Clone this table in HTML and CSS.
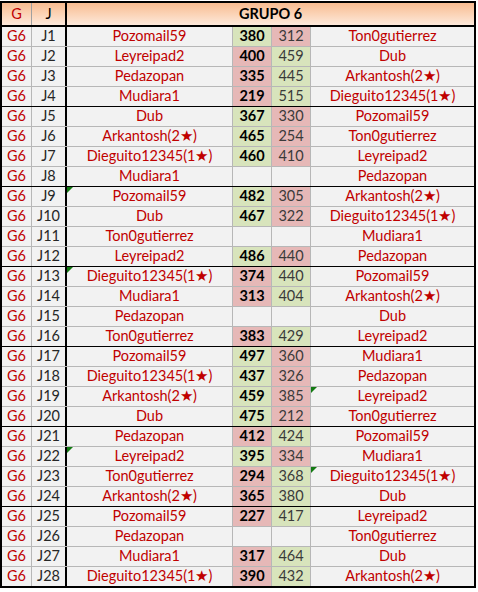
FILE: index.html
```html
<!DOCTYPE html>
<html>
<head>
<meta charset="utf-8">
<link rel="stylesheet" href="styles.css">
</head>
<body>
<div class="sheet">
  <div class="row head">
    <div class="c g red">G</div>
    <div class="c j">J</div>
    <div class="c title">GRUPO 6</div>
  </div>

  <div class="row"><div class="c g">G6</div><div class="c j">J1</div><div class="c p">Pozomail59</div><div class="c s1 win">380</div><div class="c s2 lose">312</div><div class="c p a">Ton0gutierrez</div></div>
  <div class="row"><div class="c g">G6</div><div class="c j">J2</div><div class="c p">Leyreipad2</div><div class="c s1 lose">400</div><div class="c s2 win">459</div><div class="c p a">Dub</div></div>
  <div class="row"><div class="c g">G6</div><div class="c j">J3</div><div class="c p">Pedazopan</div><div class="c s1 lose">335</div><div class="c s2 win">445</div><div class="c p a">Arkantosh(2★)</div></div>
  <div class="row end"><div class="c g">G6</div><div class="c j">J4</div><div class="c p">Mudiara1</div><div class="c s1 lose">219</div><div class="c s2 win">515</div><div class="c p a">Dieguito12345(1★)</div></div>

  <div class="row"><div class="c g">G6</div><div class="c j">J5</div><div class="c p">Dub</div><div class="c s1 win">367</div><div class="c s2 lose">330</div><div class="c p a">Pozomail59</div></div>
  <div class="row"><div class="c g">G6</div><div class="c j">J6</div><div class="c p">Arkantosh(2★)</div><div class="c s1 win">465</div><div class="c s2 lose">254</div><div class="c p a">Ton0gutierrez</div></div>
  <div class="row"><div class="c g">G6</div><div class="c j">J7</div><div class="c p">Dieguito12345(1★)</div><div class="c s1 win">460</div><div class="c s2 lose">410</div><div class="c p a">Leyreipad2</div></div>
  <div class="row end"><div class="c g">G6</div><div class="c j">J8</div><div class="c p">Mudiara1</div><div class="c s1"></div><div class="c s2"></div><div class="c p a">Pedazopan</div></div>

  <div class="row"><div class="c g">G6</div><div class="c j">J9</div><div class="c p mark">Pozomail59</div><div class="c s1 win">482</div><div class="c s2 lose">305</div><div class="c p a">Arkantosh(2★)</div></div>
  <div class="row"><div class="c g">G6</div><div class="c j">J10</div><div class="c p">Dub</div><div class="c s1 win">467</div><div class="c s2 lose">322</div><div class="c p a">Dieguito12345(1★)</div></div>
  <div class="row"><div class="c g">G6</div><div class="c j">J11</div><div class="c p">Ton0gutierrez</div><div class="c s1"></div><div class="c s2"></div><div class="c p a">Mudiara1</div></div>
  <div class="row end"><div class="c g">G6</div><div class="c j">J12</div><div class="c p">Leyreipad2</div><div class="c s1 win">486</div><div class="c s2 lose">440</div><div class="c p a">Pedazopan</div></div>

  <div class="row"><div class="c g">G6</div><div class="c j">J13</div><div class="c p mark">Dieguito12345(1★)</div><div class="c s1 lose">374</div><div class="c s2 win">440</div><div class="c p a">Pozomail59</div></div>
  <div class="row"><div class="c g">G6</div><div class="c j">J14</div><div class="c p">Mudiara1</div><div class="c s1 lose">313</div><div class="c s2 win">404</div><div class="c p a">Arkantosh(2★)</div></div>
  <div class="row"><div class="c g">G6</div><div class="c j">J15</div><div class="c p">Pedazopan</div><div class="c s1"></div><div class="c s2"></div><div class="c p a">Dub</div></div>
  <div class="row end"><div class="c g">G6</div><div class="c j">J16</div><div class="c p">Ton0gutierrez</div><div class="c s1 lose">383</div><div class="c s2 win">429</div><div class="c p a">Leyreipad2</div></div>

  <div class="row"><div class="c g">G6</div><div class="c j">J17</div><div class="c p">Pozomail59</div><div class="c s1 win">497</div><div class="c s2 lose">360</div><div class="c p a">Mudiara1</div></div>
  <div class="row"><div class="c g">G6</div><div class="c j">J18</div><div class="c p">Dieguito12345(1★)</div><div class="c s1 win">437</div><div class="c s2 lose">326</div><div class="c p a">Pedazopan</div></div>
  <div class="row"><div class="c g">G6</div><div class="c j">J19</div><div class="c p">Arkantosh(2★)</div><div class="c s1 win">459</div><div class="c s2 lose">385</div><div class="c p a mark">Leyreipad2</div></div>
  <div class="row end"><div class="c g">G6</div><div class="c j">J20</div><div class="c p">Dub</div><div class="c s1 win">475</div><div class="c s2 lose">212</div><div class="c p a">Ton0gutierrez</div></div>

  <div class="row"><div class="c g">G6</div><div class="c j">J21</div><div class="c p">Pedazopan</div><div class="c s1 lose">412</div><div class="c s2 win">424</div><div class="c p a">Pozomail59</div></div>
  <div class="row"><div class="c g">G6</div><div class="c j">J22</div><div class="c p mark">Leyreipad2</div><div class="c s1 win">395</div><div class="c s2 lose">334</div><div class="c p a">Mudiara1</div></div>
  <div class="row"><div class="c g">G6</div><div class="c j">J23</div><div class="c p">Ton0gutierrez</div><div class="c s1 lose">294</div><div class="c s2 win">368</div><div class="c p a mark">Dieguito12345(1★)</div></div>
  <div class="row end"><div class="c g">G6</div><div class="c j">J24</div><div class="c p">Arkantosh(2★)</div><div class="c s1 lose">365</div><div class="c s2 win">380</div><div class="c p a">Dub</div></div>

  <div class="row"><div class="c g">G6</div><div class="c j">J25</div><div class="c p">Pozomail59</div><div class="c s1 lose">227</div><div class="c s2 win">417</div><div class="c p a">Leyreipad2</div></div>
  <div class="row"><div class="c g">G6</div><div class="c j">J26</div><div class="c p">Pedazopan</div><div class="c s1"></div><div class="c s2"></div><div class="c p a">Ton0gutierrez</div></div>
  <div class="row"><div class="c g">G6</div><div class="c j">J27</div><div class="c p">Mudiara1</div><div class="c s1 lose">317</div><div class="c s2 win">464</div><div class="c p a">Dub</div></div>
  <div class="row last"><div class="c g">G6</div><div class="c j">J28</div><div class="c p">Dieguito12345(1★)</div><div class="c s1 lose">390</div><div class="c s2 win">432</div><div class="c p a">Arkantosh(2★)</div></div>
</div>
</body>
</html>
```

FILE: styles.css
```css
html, body {
  margin: 0;
  padding: 0;
  background: #ffffff;
}
body {
  padding-top: 1px;
  font-family: Lato, "Open Sans", sans-serif;
  font-size: 14.5px;
}
.sheet {
  width: 476px;
  box-sizing: border-box;
  border: 2px solid #000;
  display: flex;
  flex-direction: column;
}
.row {
  display: flex;
  height: 20px;
  border-bottom: 1px solid #b7b7b7;
  box-sizing: border-box;
  background: #f2f2f2;
}
.row.end {
  border-bottom-color: #000;
}
.row.last {
  border-bottom: none;
  height: 19px;
}
.row.head {
  height: 24px;
  border-bottom: 2px solid #000;
  background: linear-gradient(to bottom, #f8bc91 0%, #fbd3b6 50%, #fde9db 100%);
}
.c {
  box-sizing: border-box;
  display: flex;
  align-items: center;
  justify-content: center;
  border-right: 1px solid #b7b7b7;
  white-space: nowrap;
  position: relative;
  line-height: 1;
}
.g {
  width: 30px;
  color: #c00000;
}
.j {
  width: 35px;
  border-right: 2px solid #000;
  color: #262626;
}
.head .c {
  border-right-color: #a0a0a0;
}
.head .j {
  border-right-color: #000;
}
.head .g { color: #c00000; }
.head .j { color: #000; }
.title {
  flex: 1;
  border-right: none;
  font-weight: bold;
  color: #000;
}
.p {
  width: 166px;
  color: #c00000;
}
.p.a {
  width: 163px;
  border-right: none;
}
.s1, .s2 {
  width: 39px;
}
.s1 {
  font-weight: bold;
  color: #000;
}
.s2 {
  color: #3a3a3a;
}
.win {
  background: #d8e4bc;
}
.lose {
  background: #e6b8b7;
}
.mark::before {
  content: "";
  position: absolute;
  left: 0;
  top: 0;
  border-top: 6px solid #127a12;
  border-right: 6px solid transparent;
}
```
